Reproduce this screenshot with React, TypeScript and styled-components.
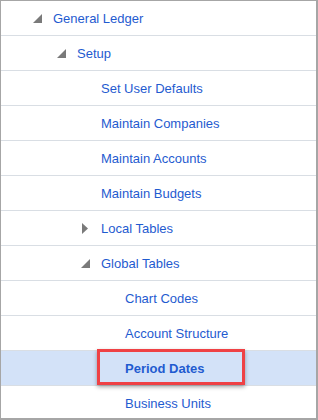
import styled, { createGlobalStyle } from "styled-components";

const GlobalStyle = createGlobalStyle`
  html, body {
    margin: 0;
    padding: 0;
    background: #ffffff;
  }
  body {
    font-family: "Liberation Sans", Arial, sans-serif;
  }
`;

const Frame = styled.div`
  box-sizing: border-box;
  width: 318px;
  height: 420px;
  overflow: hidden;
  border-top: 1px solid #a6a6a6;
  border-left: 1px solid #a6a6a6;
  border-right: 2px solid #a6a6a6;
  border-bottom: 2px solid #a6a6a6;
  background: #ffffff;
`;

const Row = styled.div<{ $level: number; $selected?: boolean }>`
  box-sizing: border-box;
  position: relative;
  height: 35px;
  display: flex;
  align-items: center;
  padding-left: ${(p) => 32 + p.$level * 24}px;
  border-bottom: 1px solid #d9dee4;
  background: ${(p) => (p.$selected ? "#d3e2f8" : "transparent")};
`;

const Toggle = styled.span`
  width: 20px;
  height: 12px;
  display: flex;
  align-items: center;
  flex: none;
`;

const Label = styled.span<{ $bold?: boolean }>`
  font-size: 13px;
  color: #1f5bd0;
  font-weight: ${(p) => (p.$bold ? 700 : 400)};
  white-space: nowrap;
`;

const Highlight = styled.div`
  position: absolute;
  left: 96px;
  top: -2px;
  width: 148px;
  height: 36px;
  box-sizing: border-box;
  border: 3px solid #ef4145;
  box-shadow: 0 2px 4px rgba(0, 0, 0, 0.35);
  pointer-events: none;
`;

const Expanded = () => (
  <svg width="9" height="9" viewBox="0 0 9 9">
    <polygon points="9,0 9,9 0,9" fill="#7a7a7a" />
  </svg>
);

const Collapsed = () => (
  <svg width="7" height="11" viewBox="0 0 7 11" style={{ marginLeft: 1 }}>
    <polygon points="0,0 6,5.5 0,11" fill="#7a7a7a" />
  </svg>
);

type Node = {
  label: string;
  level: number;
  state?: "open" | "closed";
  selected?: boolean;
};

const nodes: Node[] = [
  { label: "General Ledger", level: 0, state: "open" },
  { label: "Setup", level: 1, state: "open" },
  { label: "Set User Defaults", level: 2 },
  { label: "Maintain Companies", level: 2 },
  { label: "Maintain Accounts", level: 2 },
  { label: "Maintain Budgets", level: 2 },
  { label: "Local Tables", level: 2, state: "closed" },
  { label: "Global Tables", level: 2, state: "open" },
  { label: "Chart Codes", level: 3 },
  { label: "Account Structure", level: 3 },
  { label: "Period Dates", level: 3, selected: true },
  { label: "Business Units", level: 3 },
];

const App = () => (
  <>
    <GlobalStyle />
    <Frame>
      {nodes.map((n) => (
        <Row key={n.label} $level={n.level} $selected={n.selected}>
          <Toggle>
            {n.state === "open" && <Expanded />}
            {n.state === "closed" && <Collapsed />}
          </Toggle>
          <Label $bold={n.selected}>{n.label}</Label>
          {n.selected && <Highlight />}
        </Row>
      ))}
    </Frame>
  </>
);

export default App;
